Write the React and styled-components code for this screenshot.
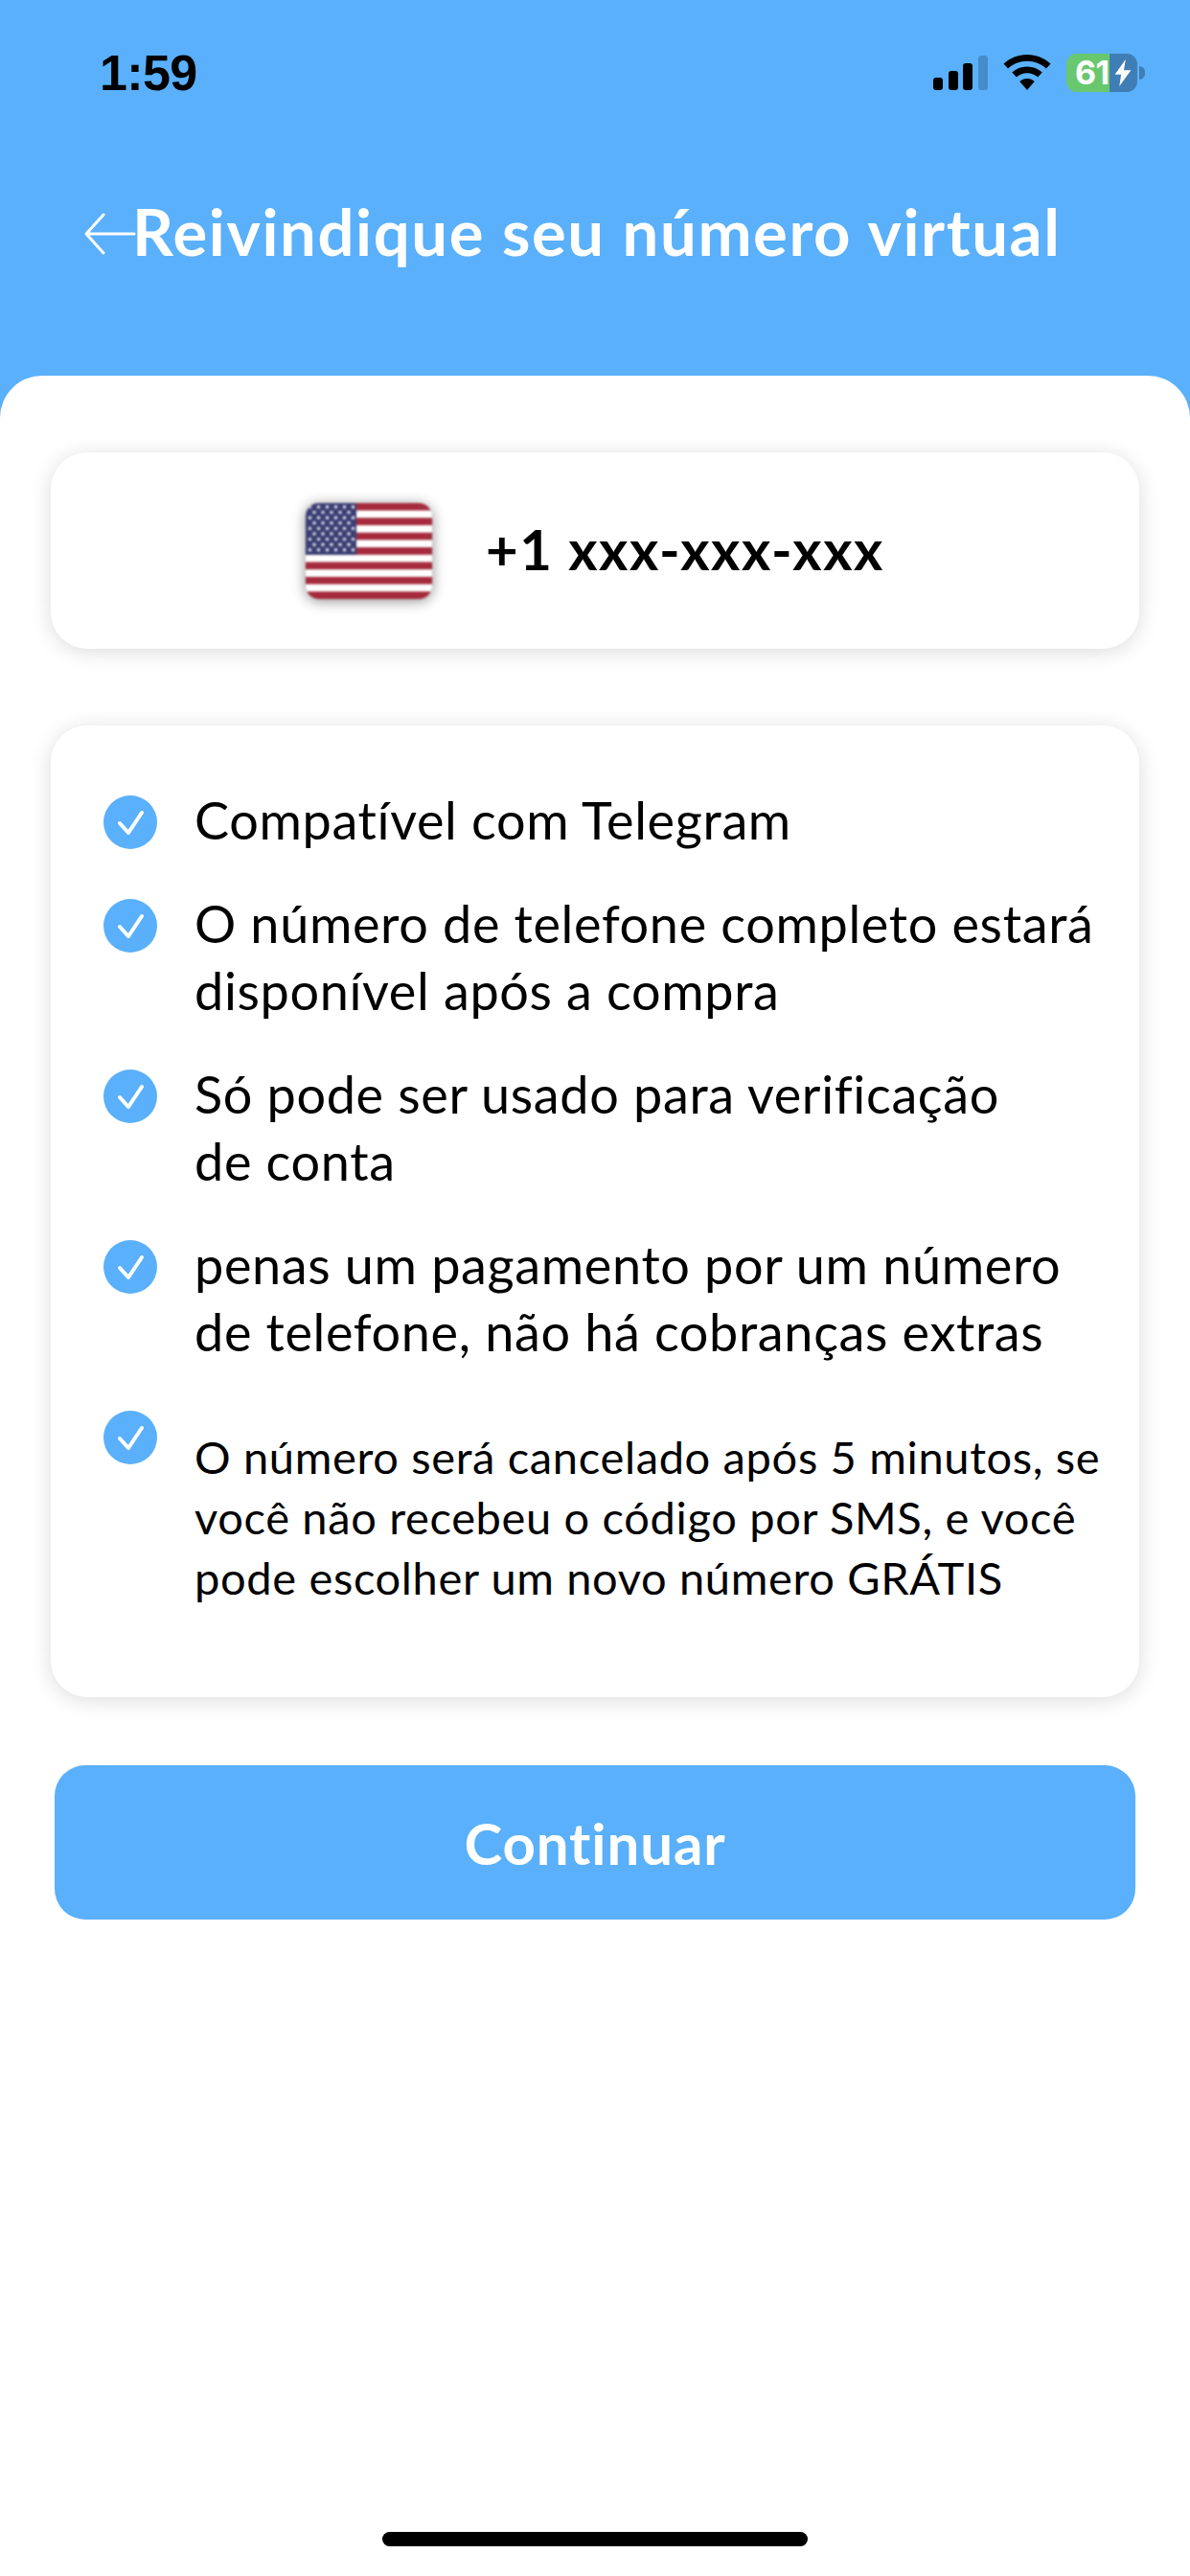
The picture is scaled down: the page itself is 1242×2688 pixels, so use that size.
import React from "react";
import styled, { createGlobalStyle } from "styled-components";

const Global = createGlobalStyle`
  html, body { margin: 0; padding: 0; background: #fff; }
  * { box-sizing: border-box; }
`;
const Page = styled.div`
  width: 1242px; height: 2688px; background: #5ab0fa; display: flex; flex-direction: column;
  font-family: Lato, "Open Sans", sans-serif; color: #000; overflow: hidden;
`;
const StatusBar = styled.div`
  height: 150px; padding: 46px 47px 0 104px; display: flex; justify-content: space-between; align-items: flex-start;
`;
const Time = styled.div`
  font: 700 52px/60px "Liberation Sans", sans-serif; letter-spacing: -0.6px;
`;
const StatusIcons = styled.div`
  display: flex; align-items: center; gap: 16px; padding-top: 10px;
`;
const Battery = styled.div`
  position: relative; width: 74px; height: 40px; border-radius: 11px;
  background: linear-gradient(90deg, #69c76e 0 61%, #3f7eb5 61% 100%);
  color: #fff; font: 700 34px/40px Inter, "Liberation Sans", sans-serif; padding-left: 9px; letter-spacing: -0.5px;
`;
const BatteryWrap = styled.div`
  display: flex; align-items: center; gap: 2px;
`;
const BatteryTip = styled.div`
  width: 6px; height: 14px; border-radius: 0 7px 7px 0; background: #3f7eb5;
`;
const Bolt = styled.svg`
  position: absolute; right: 5px; top: 6px; width: 20px; height: 28px;
`;
const TitleRow = styled.div`
  height: 242px; padding: 49px 0 0 88px; display: flex; align-items: flex-start;
`;
const BackArrow = styled.svg`
  width: 54px; height: 44px; margin-top: 23px; flex: none;
`;
const Title = styled.h1`
  margin: 0 0 0 -4px; color: #fff; font: 700 67px/84px Lato, sans-serif; white-space: nowrap; letter-spacing: 1.6px;
`;
const Sheet = styled.main`
  flex: 1; background: #fff; border-radius: 44px 44px 0 0; padding: 80px 53px 31px; display: flex; flex-direction: column;
`;
const Card = styled.section`
  background: #fff; border-radius: 38px; box-shadow: 0 3px 22px rgba(0,0,0,.14);
`;
const NumberCard = styled(Card)`
  height: 205px; display: flex; align-items: center; padding-left: 266px; gap: 56px;
`;
const Flag = styled.svg`
  width: 132px; height: 100px; flex: none; border-radius: 14px; filter: blur(1.2px) drop-shadow(0 2px 7px rgba(0,0,0,.45));
`;
const PhoneNumber = styled.div`
  font-weight: 700; font-size: 58px; line-height: 70px; letter-spacing: 1.6px; white-space: nowrap; margin-top: -3px;
`;
const FeatureCard = styled(Card)`
  margin-top: 80px; height: 1014px; padding: 64px 0 0 55px; display: flex; flex-direction: column; gap: 38px;
`;
const Feature = styled.div`
  display: flex; align-items: flex-start; gap: 39px;
`;
const CheckIcon = styled.svg`
  width: 56px; height: 56px; flex: none; margin-top: 9px;
`;
const FeatureText = styled.div`
  font-size: ${p => (p.$small ? 47 : 54)}px;
  line-height: ${p => (p.$small ? 63 : 70)}px;
  margin-top: ${p => (p.$small ? 26 : 0)}px;
  white-space: pre;
  letter-spacing: ${p => (p.$small ? 0.65 : 0.65)}px;
`;
const Button = styled.button`
  margin: 71px 4px 0; height: 161px; border: 0; border-radius: 32px; background: #5ab0fa; color: #fff;
  font: 700 60px/70px Lato, sans-serif; letter-spacing: 0.9px;
`;
const HomeBar = styled.div`
  margin: auto auto 0; width: 444px; height: 15px; border-radius: 8px; background: #000;
`;

const Check = () => (
  <CheckIcon viewBox="0 0 56 56">
    <circle cx="28" cy="28" r="28" fill="#5ab0fa" />
    <path d="M17 29l9 10 14-21" fill="none" stroke="#fff" strokeWidth="4" strokeLinecap="round" strokeLinejoin="round" />
  </CheckIcon>
);

const stripes = Array.from({ length: 13 }, (_, i) => i);
const stars = [];
for (let r = 0; r < 9; r++) {
  const n = r % 2 ? 5 : 6;
  for (let c = 0; c < n; c++) stars.push([(r % 2 ? 9 : 4.5) + c * 9, 4 + r * 5.6]);
}
const features = [
  { text: "Compatível com Telegram" },
  { text: "O número de telefone completo estará\ndisponível após a compra" },
  { text: "Só pode ser usado para verificação\nde conta" },
  { text: "penas um pagamento por um número\nde telefone, não há cobranças extras" },
  { text: "O número será cancelado após 5 minutos, se\nvocê não recebeu o código por SMS, e você\npode escolher um novo número GRÁTIS", small: true },
];

export default function App() {
  return (
    <Page>
      <Global />
      <StatusBar>
        <Time>1:59</Time>
        <StatusIcons>
          <svg width="57" height="36" viewBox="0 0 57 36">
            <rect x="0" y="23" width="10" height="13" rx="3" fill="#000" />
            <rect x="16" y="16" width="10" height="20" rx="3" fill="#000" />
            <rect x="31" y="8" width="10" height="28" rx="3" fill="#000" />
            <rect x="47" y="0" width="10" height="36" rx="3" fill="#458ccb" />
          </svg>
          <svg width="50" height="38" viewBox="0 0 50 38">
            <path d="M25 0C15.500 0 7 3.600 0.500 9.500L5 14.500C10.300 9.700 17.300 6.800 25 6.800s14.700 2.900 20 7.700l4.500-5C43 3.600 34.500 0 25 0Z" fill="#000" />
            <path d="M25 12.500c-6 0-11.500 2.300-15.700 6l4.500 5c3-2.600 6.900-4.200 11.200-4.200s8.200 1.600 11.200 4.200l4.500-5c-4.200-3.700-9.700-6-15.700-6Z" fill="#000" />
            <path d="M25 25c-2.900 0-5.600 1.100-7.700 2.900L25 37l7.700-9.100C30.600 26.100 27.900 25 25 25Z" fill="#000" />
          </svg>
          <BatteryWrap>
            <Battery>
              61
              <Bolt viewBox="0 0 20 30">
                <path d="M13 0L1 17h7L6 30 19 12h-8L13 0Z" fill="#fff" />
              </Bolt>
            </Battery>
            <BatteryTip />
          </BatteryWrap>
        </StatusIcons>
      </StatusBar>
      <TitleRow>
        <BackArrow viewBox="0 0 54 44">
          <path d="M52 22H2M20 2L2 22l18 20" fill="none" stroke="#fff" strokeWidth="3" strokeLinecap="round" strokeLinejoin="round" />
        </BackArrow>
        <Title>Reivindique seu número virtual</Title>
      </TitleRow>
      <Sheet>
        <NumberCard>
          <Flag viewBox="0 0 132 100">
            {stripes.map(i => (
              <rect key={i} x="0" y={(i * 100) / 13} width="132" height={100 / 13 + 0.2} fill={i % 2 ? "#fff" : "#a52b3c"} />
            ))}
            <rect width="53" height="54" fill="#3c3f73" />
            {stars.map(([x, y], i) => (
              <circle key={i} cx={x} cy={y} r="1.700" fill="#e8e8f4" />
            ))}
          </Flag>
          <PhoneNumber>+1 xxx-xxx-xxx</PhoneNumber>
        </NumberCard>
        <FeatureCard>
          {features.map(f => (
            <Feature key={f.text}>
              <Check />
              <FeatureText $small={f.small}>{f.text}</FeatureText>
            </Feature>
          ))}
        </FeatureCard>
        <Button>Continuar</Button>
        <HomeBar />
      </Sheet>
    </Page>
  );
}
